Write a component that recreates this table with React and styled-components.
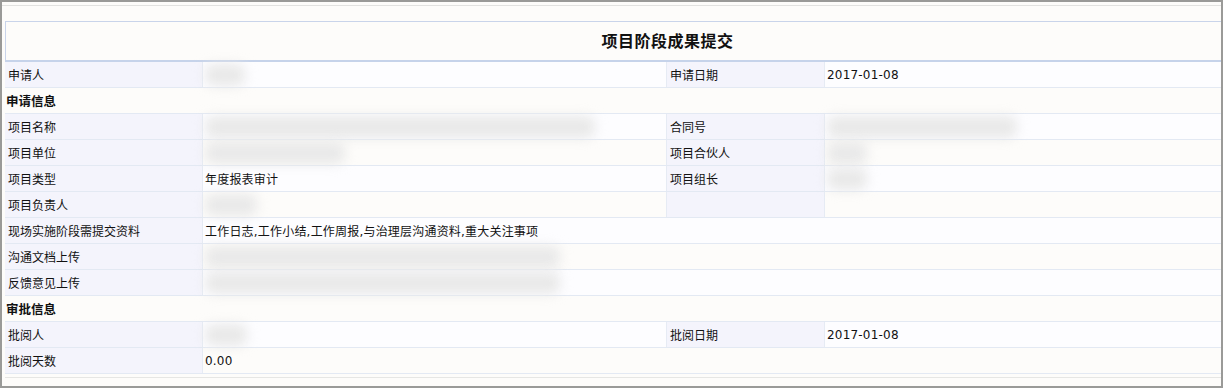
import React from "react";
import styled, { createGlobalStyle } from "styled-components";

const GlobalStyle = createGlobalStyle`
  html, body {
    margin: 0;
    padding: 0;
    background: #ffffff;
  }
  * {
    box-sizing: border-box;
  }
`;

const rows = [
  { type: "pair", label: "申请人", value: { blur: 40 }, label2: "申请日期", value2: "2017-01-08" },
  { type: "section", label: "申请信息" },
  { type: "pair", label: "项目名称", value: { blur: 390 }, label2: "合同号", value2: { blur: 190 } },
  { type: "pair", label: "项目单位", value: { blur: 140 }, label2: "项目合伙人", value2: { blur: 40 } },
  { type: "pair", label: "项目类型", value: "年度报表审计", label2: "项目组长", value2: { blur: 40 } },
  { type: "pair", label: "项目负责人", value: { blur: 52 }, label2: "", value2: "" },
  { type: "wide", label: "现场实施阶段需提交资料", value: "工作日志,工作小结,工作周报,与治理层沟通资料,重大关注事项" },
  { type: "wide", label: "沟通文档上传", value: { blur: 355 } },
  { type: "wide", label: "反馈意见上传", value: { blur: 355 } },
  { type: "section", label: "审批信息" },
  { type: "pair", label: "批阅人", value: { blur: 42 }, label2: "批阅日期", value2: "2017-01-08" },
  { type: "wide", label: "批阅天数", value: "0.00" },
];

function CellValue({ value }) {
  if (value && typeof value === "object") {
    return <Blur $w={value.blur} />;
  }
  return value;
}

export default function App() {
  return (
    <>
      <GlobalStyle />
      <Frame>
        <TopRule />
        <Sheet>
          <TitleBar>项目阶段成果提交</TitleBar>
          {rows.map((row, i) => {
            const tint = i % 2 === 0;
            if (row.type === "section") {
              return (
                <Row key={i} $tint={tint}>
                  <SectionCell>{row.label}</SectionCell>
                </Row>
              );
            }
            if (row.type === "wide") {
              return (
                <Row key={i} $tint={tint}>
                  <Label>{row.label}</Label>
                  <Value $span={3}>
                    <CellValue value={row.value} />
                  </Value>
                </Row>
              );
            }
            return (
              <Row key={i} $tint={tint}>
                <Label>{row.label}</Label>
                <Value>
                  <CellValue value={row.value} />
                </Value>
                <Label $edge>{row.label2}</Label>
                <Value>
                  <CellValue value={row.value2} />
                </Value>
              </Row>
            );
          })}
          <BottomRule />
        </Sheet>
      </Frame>
    </>
  );
}

const Frame = styled.div`
  width: 1223px;
  height: 388px;
  border: 2px solid #9a9a98;
  background: #fdfcfa;
  font-family: "Noto Sans CJK SC", "Noto Sans", sans-serif;
  font-size: 12px;
  color: #111111;
  overflow: hidden;
`;

const TopRule = styled.div`
  height: 2px;
  margin-top: 3px;
  border-top: 1px solid #e2e2e0;
`;

const Sheet = styled.div`
  margin: 14px 0 0 3px;
  display: flex;
  flex-direction: column;
`;

const TitleBar = styled.div`
  height: 41px;
  border-top: 1px solid #c9d4ea;
  border-left: 1px solid #c9d4ea;
  border-bottom: 2px solid #c6d3ea;
  display: flex;
  align-items: center;
  justify-content: center;
  padding: 0 0 3px 108px;
  font-size: 16px;
  font-weight: bold;
  letter-spacing: 0.5px;
  color: #111111;
`;

const Row = styled.div`
  display: grid;
  grid-template-columns: 198px 463px 159px 1fr;
  height: 26px;
  border-bottom: 1px solid #e3e9f3;
  background: ${(p) => (p.$tint ? "#fdfdff" : "#fdfcfa")};
`;

const Label = styled.div`
  display: flex;
  align-items: center;
  padding-left: 3px;
  background: #f4f4fc;
  border-right: 1px solid #e6ebf4;
  border-left: ${(p) => (p.$edge ? "1px solid #e6ebf4" : "none")};
  white-space: nowrap;
`;

const Value = styled.div`
  display: flex;
  align-items: center;
  padding-left: 2px;
  grid-column: span ${(p) => p.$span || 1};
  white-space: nowrap;
  font-family: "DejaVu Sans", "Noto Sans CJK SC", sans-serif;
  font-size: 12px;
  letter-spacing: 0.2px;
`;

const SectionCell = styled.div`
  grid-column: span 4;
  display: flex;
  align-items: center;
  padding-left: 1px;
  font-weight: bold;
  font-size: 12.5px;
`;

const Blur = styled.span`
  display: block;
  width: ${(p) => p.$w}px;
  height: 22px;
  background: #e9e9e9;
  border-radius: 8px;
  filter: blur(6px);
`;

const BottomRule = styled.div`
  height: 4px;
  border-bottom: 1px solid #e6e6e4;
`;
